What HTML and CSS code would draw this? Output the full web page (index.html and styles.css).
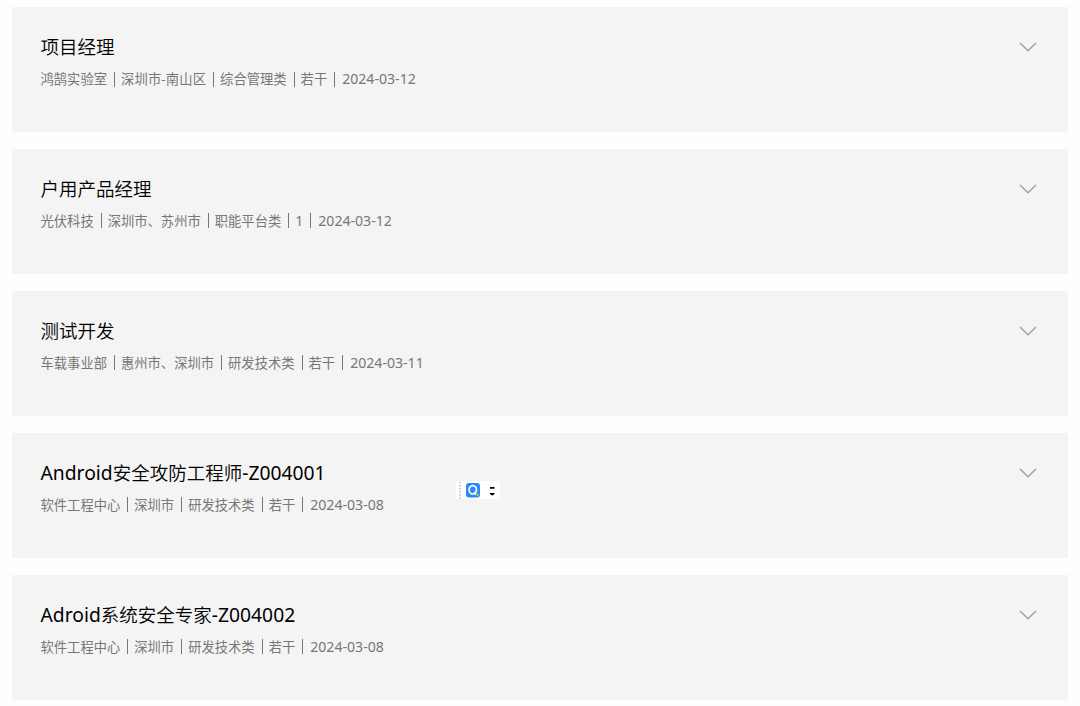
FILE: index.html
```html
<!DOCTYPE html>
<html lang="zh-CN">
<head>
  <meta charset="UTF-8">
  <title>招聘职位</title>
  <link rel="stylesheet" href="styles.css">
</head>
<body>
  <div class="job-list">
    <div class="job">
      <div class="info">
        <h3>项目经理</h3>
        <p><span>鸿鹄实验室</span><span class="district">深圳市-南山区</span><span>综合管理类</span><span>若干</span><span class="date">2024-03-12</span></p>
      </div>
      <svg class="arrow" viewBox="0 0 18 10"><path d="M1 1l8 7.700 8-7.700"/></svg>
    </div>
    <div class="job">
      <div class="info">
        <h3>户用产品经理</h3>
        <p><span>光伏科技</span><span>深圳市、苏州市</span><span>职能平台类</span><span class="count">1</span><span class="date">2024-03-12</span></p>
      </div>
      <svg class="arrow" viewBox="0 0 18 10"><path d="M1 1l8 7.700 8-7.700"/></svg>
    </div>
    <div class="job">
      <div class="info">
        <h3>测试开发</h3>
        <p><span>车载事业部</span><span>惠州市、深圳市</span><span>研发技术类</span><span>若干</span><span class="date">2024-03-11</span></p>
      </div>
      <svg class="arrow" viewBox="0 0 18 10"><path d="M1 1l8 7.700 8-7.700"/></svg>
    </div>
    <div class="job">
      <div class="info">
        <h3><b>Android</b>安全攻防工程师<b>-Z004001</b></h3>
        <p><span>软件工程中心</span><span>深圳市</span><span>研发技术类</span><span>若干</span><span class="date">2024-03-08</span></p>
      </div>
      <svg class="arrow" viewBox="0 0 18 10"><path d="M1 1l8 7.700 8-7.700"/></svg>
    </div>
    <div class="job">
      <div class="info">
        <h3><b>Adroid</b>系统安全专家<b>-Z004002</b></h3>
        <p><span>软件工程中心</span><span>深圳市</span><span>研发技术类</span><span>若干</span><span class="date">2024-03-08</span></p>
      </div>
      <svg class="arrow" viewBox="0 0 18 10"><path d="M1 1l8 7.700 8-7.700"/></svg>
    </div>
  </div>

  <div class="search-float">
    <svg viewBox="0 0 44 18">
      <path class="grip" d="M4 1v17"/>
      <rect class="logo" x="10" y="2" width="14" height="14.500" rx="3"/>
      <ellipse class="ring" cx="16.800" cy="8.800" rx="3.700" ry="4.200"/>
      <path class="ring" d="M17.800 11.500l2 2"/>
      <circle class="dot" cx="21.500" cy="13.800" r="1.300"/>
      <path d="M34 6h4.500v1.800H34zM33.500 12h5.500l-1.800 2.300h-1.900z"/>
    </svg>
  </div>
</body>
</html>
```

FILE: styles.css
```css
* { box-sizing: border-box; }
body { margin: 0; background: #fefefe; font-family: "Noto Sans", "Noto Sans CJK SC", sans-serif; }
.job-list { padding: 7px 12px 0; display: flex; flex-direction: column; gap: 17.300px; }
.job { height: 124.700px; background: #f4f4f4; padding: 26px 31px 0 28.500px; display: flex; justify-content: space-between; }
h3 { margin: 0; font-size: 18.500px; font-weight: 350; line-height: 28px; color: #000; }
h3 b { font-size: 19.300px; font-weight: 400; line-height: 1; }
p { margin: 8px 0 0; display: flex; align-items: center; font-size: 13.300px; line-height: 20px; color: #777; }
p span + span { margin-left: 7px; padding-left: 7px; background: linear-gradient(#777, #777) 0 50% / 1px 15px no-repeat; }
p .district { letter-spacing: 0.150px; }
p .count { font-size: 14px; }
p span + .date { padding-left: 8px; font-size: 14.100px; }
.arrow { width: 18px; height: 10px; margin-top: 9px; fill: none; stroke: #a0a0a0; stroke-width: 1.5; }
.search-float { position: absolute; left: 456px; top: 481px; width: 44px; height: 18px; background: #fff; }
.search-float svg { display: block; width: 44px; height: 18px; }
.grip { stroke: #999; stroke-dasharray: 1.500 1.500; }
.logo { fill: #2e86f7; }
.ring { fill: none; stroke: #fff; stroke-width: 1.7; }
.dot { fill: #7be04a; }
```
